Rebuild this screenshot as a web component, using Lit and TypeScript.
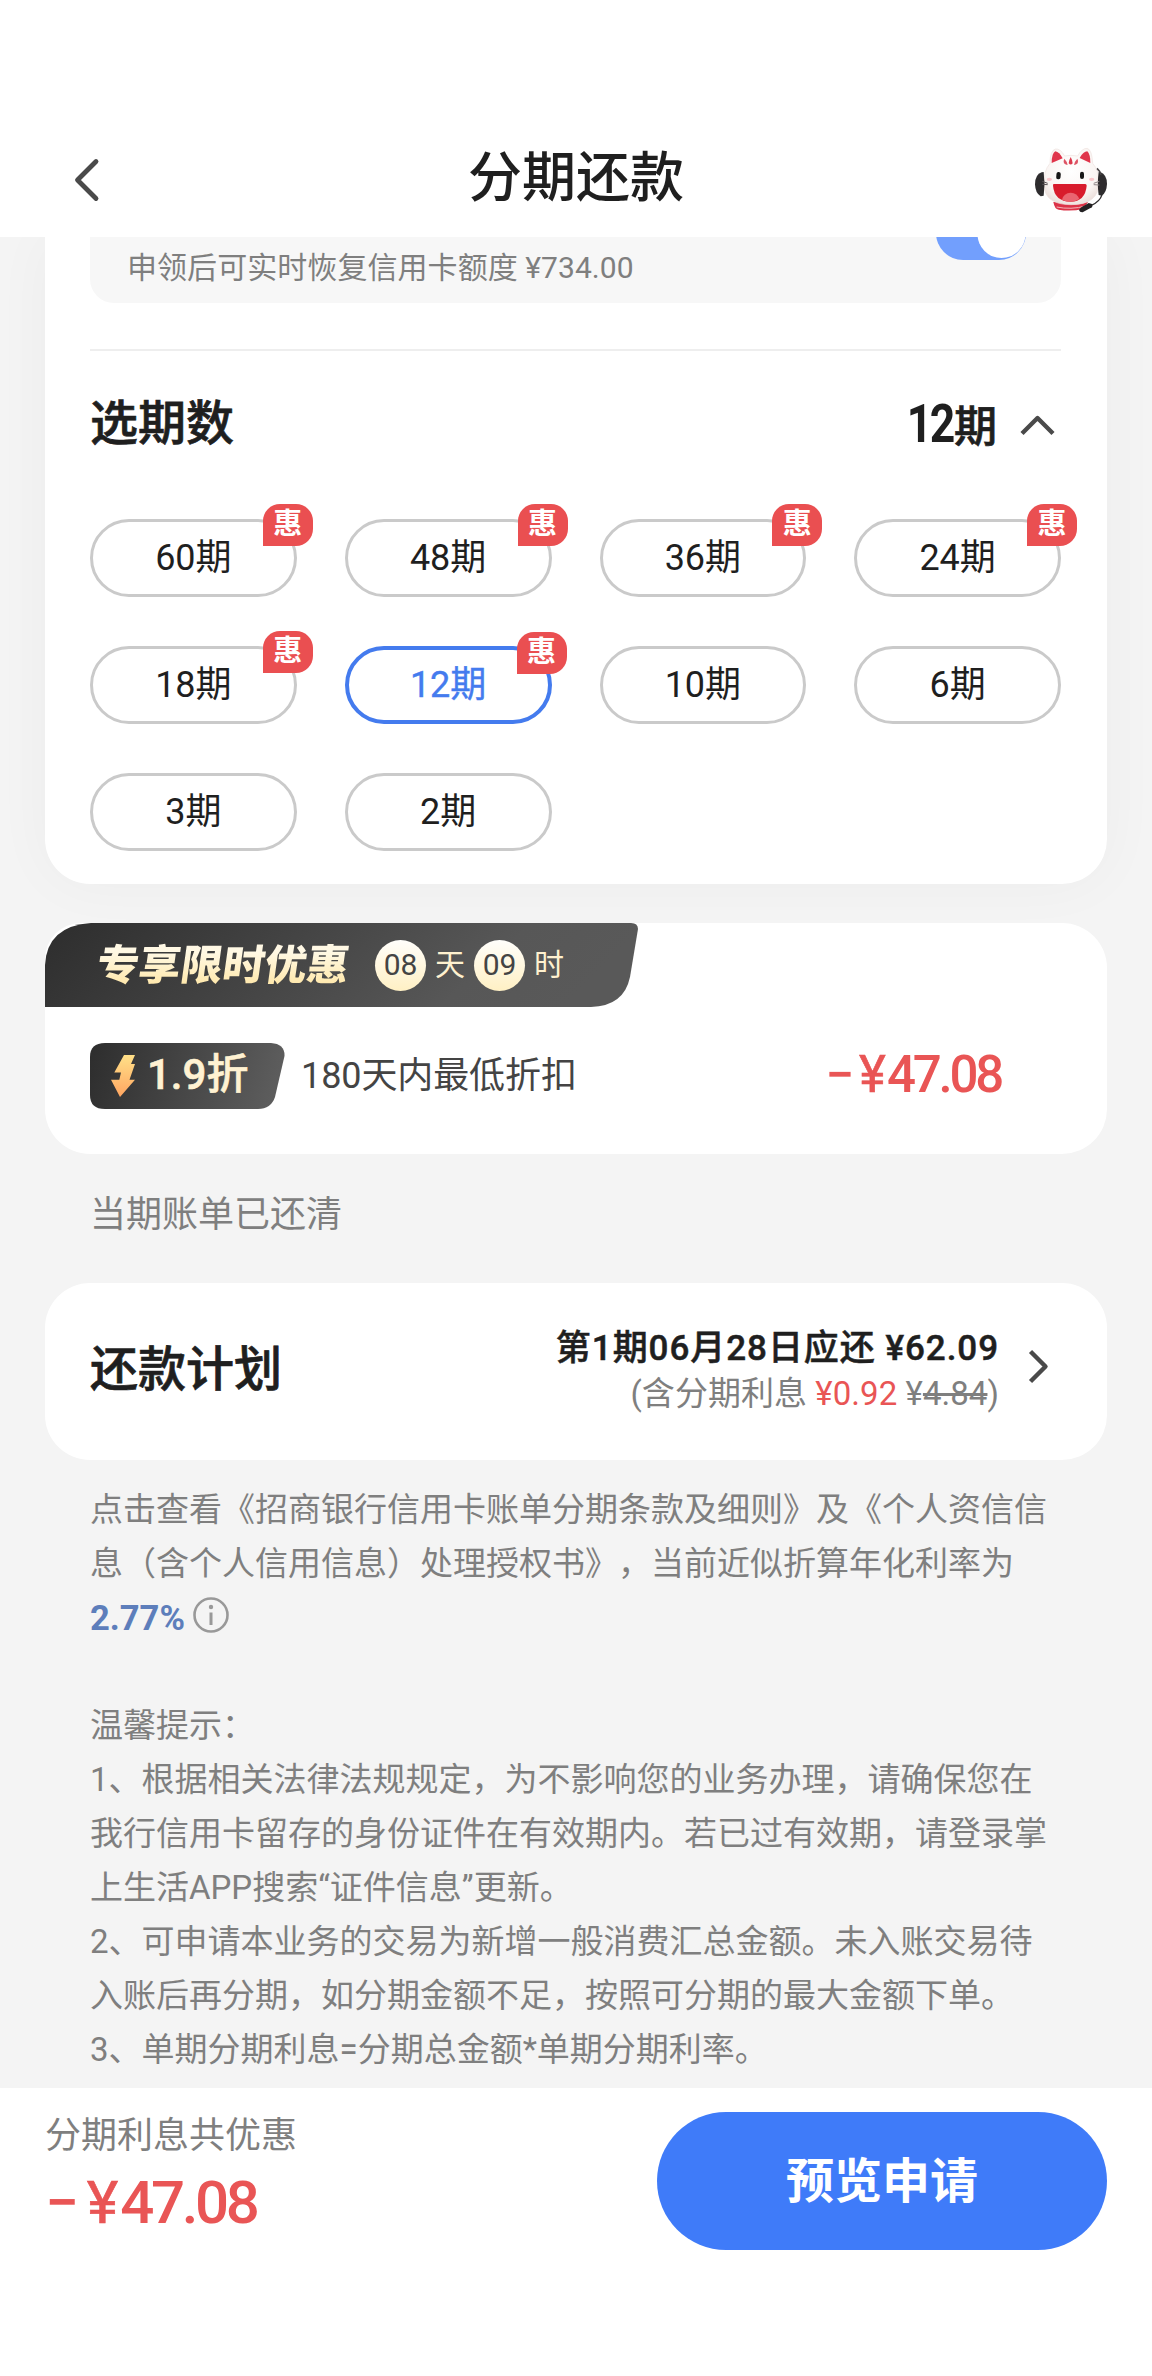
import { LitElement, html, css, svg, nothing } from "lit";
import { customElement, property, state } from "lit/decorators.js";
import { classMap } from "lit/directives/class-map.js";

interface Term {
  months: number;
  promo: boolean;
}

const TERMS: Term[] = [
  { months: 60, promo: true },
  { months: 48, promo: true },
  { months: 36, promo: true },
  { months: 24, promo: true },
  { months: 18, promo: true },
  { months: 12, promo: true },
  { months: 10, promo: false },
  { months: 6, promo: false },
  { months: 3, promo: false },
  { months: 2, promo: false },
];

const NOTICE: string[] = [
  "温馨提示：",
  "1、根据相关法律法规规定，为不影响您的业务办理，请确保您在",
  "我行信用卡留存的身份证件在有效期内。若已过有效期，请登录掌",
  "上生活APP搜索“证件信息”更新。",
  "2、可申请本业务的交易为新增一般消费汇总金额。未入账交易待",
  "入账后再分期，如分期金额不足，按照可分期的最大金额下单。",
  "3、单期分期利息=分期总金额*单期分期利率。",
];

const chevron = (points: string, w: number, h: number) => html`
  <svg width=${w} height=${h} viewBox="0 0 ${w} ${h}" fill="none">
    ${svg`<polyline points=${points} stroke="#4a4a4a" stroke-width="4.4" stroke-linejoin="round"/>`}
  </svg>
`;

@customElement("app-header")
export class AppHeader extends LitElement {
  static styles = css`
    :host {
      display: grid;
      grid-template-columns: 1fr auto 1fr;
      align-items: center;
      height: 117px;
      padding: 120px 45px 0;
      background: #fff;
      position: relative;
      z-index: 1;
    }
    svg {
      display: block;
    }
    .back {
      padding: 3px 0 0 28px;
    }
    .title {
      font-size: 54px;
      line-height: 60px;
      font-weight: 500;
      color: #1f1f1f;
    }
    .helper {
      justify-self: end;
      padding-top: 2px;
    }
  `;

  render() {
    return html`
      <div class="back">
        <svg width="28" height="44" viewBox="0 0 28 44" fill="none">
          <polyline
            points="23,3.5 4.5,22 23,40.5"
            stroke="#4a4a4a"
            stroke-width="4.8"
            stroke-linecap="round"
            stroke-linejoin="round"
          />
        </svg>
      </div>
      <div class="title">分期还款</div>
      <div class="helper">
        <svg width="72" height="66" viewBox="105 49 216 198">
          <defs>
            <radialGradient id="face" cx=".5" cy=".4" r=".65">
              <stop offset="0" stop-color="#fff" />
              <stop offset=".7" stop-color="#faf5f3" />
              <stop offset="1" stop-color="#e9dcd8" />
            </radialGradient>
          </defs>
          <path d="M160 214 Q164 236 176 237 Q212 243 250 235 L264 214Z" fill="#dc3348" />
          <path d="M170 229 Q212 238 258 226" stroke="#f3b5b8" stroke-width="3" fill="none" />
          <path
            d="M150 98 Q150 60 166 55 Q181 53 194 76 Q212 72 233 76 Q246 52 262 53 Q276 58 278 98 Q298 120 297 156 Q296 222 213 222 Q133 222 131 160 Q131 120 150 98Z"
            fill="url(#face)"
            stroke="#eee3e0"
            stroke-width="2"
          />
          <path d="M155 97 Q155 68 166 62 Q178 64 188 83Z" fill="#e0344a" />
          <path d="M239 82 Q250 62 262 62 Q271 70 271 97Z" fill="#e0344a" />
          <path d="M212 79 Q206 90 206 98 Q212 105 218 98 Q218 90 212 79Z" fill="#dd3a4e" />
          <path d="M193 84 Q189 91 192 98 Q197 103 203 103 Q201 92 193 84Z" fill="#dd5465" />
          <path d="M232 84 Q236 91 233 98 Q228 103 222 103 Q224 92 232 84Z" fill="#dd5465" />
          <path d="M125 125 Q105 132 105 161 Q106 188 122 197 L131 195 Q136 160 131 124Z" fill="#2e2c2e" />
          <path d="M301 124 Q321 132 321 160 Q320 186 305 195 L296 193 Q291 160 296 124Z" fill="#2e2c2e" />
          <path d="M291 113 Q300 121 303 132" stroke="#4b4648" stroke-width="5" fill="none" />
          <path d="M127 152 L143 158 M127 161 L143 162" stroke="#5a5356" stroke-width="3" />
          <path d="M298 152 L281 158 M298 163 L281 162" stroke="#8c8486" stroke-width="3" />
          <ellipse cx="148" cy="146" rx="8" ry="5" fill="#f9c6ca" />
          <ellipse cx="275" cy="146" rx="8" ry="5" fill="#f9c6ca" />
          <rect x="169" y="124" width="13" height="22" rx="6" fill="#171717" transform="rotate(5 175 135)" />
          <rect x="240" y="123" width="12" height="22" rx="6" fill="#171717" />
          <path d="M160 160 L256 160 Q260 160 260 165 Q256 212 212 213 Q163 212 159 165Z" fill="#d81b2c" />
          <path d="M186 207 Q191 187 212 186 Q232 187 238 205 Q226 213 212 213 Q196 213 186 207Z" fill="#ea6470" />
          <path d="M306 192 Q300 213 274 224" stroke="#2e2c2e" stroke-width="4" fill="none" />
          <path d="M266 217 L276 220 Q280 231 270 233 L248 245 Q239 246 237 238 Q240 230 256 223Z" fill="#232123" />
        </svg>
      </div>
    `;
  }
}

@customElement("term-option")
export class TermOption extends LitElement {
  @property({ type: Number }) months = 0;
  @property({ type: Boolean }) promo = false;
  @property({ type: Boolean }) selected = false;

  static styles = css`
    :host {
      display: block;
      position: relative;
    }
    .pill {
      box-sizing: border-box;
      width: 100%;
      height: 78px;
      border: 3px solid #cacaca;
      border-radius: 39px;
      background: #fff;
      color: #1f1f1f;
      font-size: 36px;
      line-height: 72px;
      text-align: center;
    }
    .pill.selected {
      border: 4px solid #447bee;
      line-height: 70px;
      color: #447bee;
      -webkit-text-stroke: 0.4px #447bee;
    }
    .badge {
      position: absolute;
      top: -15px;
      right: -16px;
      width: 50px;
      height: 42px;
      border-radius: 17px 17px 17px 0;
      background: #ea4f51;
      color: #fff;
      font-size: 29px;
      font-weight: 700;
      line-height: 41px;
      text-align: center;
    }
    .badge.inset {
      top: -14px;
      right: -15px;
    }
  `;

  render() {
    return html`
      <div class=${classMap({ pill: true, selected: this.selected })}>${this.months}期</div>
      ${this.promo
        ? html`<span class=${classMap({ badge: true, inset: this.selected })}>惠</span>`
        : nothing}
    `;
  }
}

@customElement("offer-card")
export class OfferCard extends LitElement {
  static styles = css`
    :host {
      display: block;
      height: 231px;
      border-radius: 36px 45px 45px 45px;
      background: #fff;
    }
    .banner {
      position: relative;
      display: flex;
      align-items: center;
      width: 593px;
      height: 84px;
    }
    .shape {
      position: absolute;
      inset: 0;
      display: block;
    }
    .headline,
    .count,
    .unit {
      position: relative;
    }
    .headline {
      margin-left: 52px;
      padding-top: 2px;
      width: 254px;
      font-size: 42px;
      line-height: 50px;
      font-weight: 900;
      white-space: nowrap;
      color: transparent;
      background: linear-gradient(#fff8e4 25%, #ffe9ae 85%);
      -webkit-background-clip: text;
      background-clip: text;
      transform: skewX(-8deg);
    }
    .count {
      width: 51px;
      height: 51px;
      margin-left: 24px;
      border-radius: 50%;
      background: linear-gradient(#fffefb, #fff0c4);
      color: #444;
      font-size: 30px;
      line-height: 50px;
      text-align: center;
    }
    .unit {
      margin-left: 9px;
      width: 30px;
      color: #fff1cf;
      font-size: 30px;
      line-height: 52px;
    }
    .unit + .count {
      margin-left: 9px;
    }
    .body {
      display: flex;
      align-items: center;
      height: 66px;
      padding: 36px 106px 0 45px;
    }
    .tag {
      position: relative;
      display: flex;
      align-items: center;
      box-sizing: border-box;
      width: 195px;
      height: 66px;
      padding-left: 21px;
    }
    .tag svg {
      position: relative;
      flex: none;
      margin-right: 11px;
    }
    .tag svg.shape {
      position: absolute;
    }
    .rate {
      position: relative;
      padding-bottom: 2px;
      color: #fff2d2;
      font-size: 42px;
      line-height: 60px;
      font-weight: 500;
      white-space: nowrap;
      -webkit-text-stroke: 0.6px #fff2d2;
    }
    .desc {
      margin-left: 16px;
      font-size: 36px;
      line-height: 60px;
      color: #444;
      letter-spacing: -0.1px;
    }
    .amount {
      margin-left: auto;
      padding-bottom: 3px;
      font-size: 51px;
      line-height: 60px;
      font-weight: 500;
      color: #e95555;
      letter-spacing: -3.2px;
    }
    .amount .sign {
      letter-spacing: 5px;
    }
    .amount .yen {
      font-weight: 400;
      -webkit-text-stroke: 0.6px #e95555;
      letter-spacing: 1px;
    }
  `;

  render() {
    return html`
      <div class="banner">
        <svg class="shape" width="593" height="84" viewBox="0 0 593 84">
          <defs>
            <linearGradient id="dark" x1="0" y1="0" x2="1" y2=".15">
              <stop offset="0" stop-color="#2d2d2d" />
              <stop offset=".8" stop-color="#575757" />
              <stop offset="1" stop-color="#595959" />
            </linearGradient>
          </defs>
          <path
            d="M0 84 V42 Q2 3 46 0 H586 Q593 0 593 6 L585 54 Q579 83 546 84Z"
            fill="url(#dark)"
          />
        </svg>
        <span class="headline">专享限时优惠</span>
        <span class="count">08</span>
        <span class="unit">天</span>
        <span class="count">09</span>
        <span class="unit">时</span>
      </div>
      <div class="body">
        <div class="tag">
          <svg class="shape" width="195" height="66" viewBox="0 0 195 66">
            <defs>
              <linearGradient id="tagfill" x1="0" y1="0" x2="1" y2=".1">
                <stop offset="0" stop-color="#2d2d2d" />
                <stop offset="1" stop-color="#5c5c5c" />
              </linearGradient>
            </defs>
            <path
              d="M15 0 H181 Q195 1 194.500 13 L185 54 Q181 66 168 66 H15 Q0 66 0 52 V14 Q0 0 15 0Z"
              fill="url(#tagfill)"
            />
          </svg>
          <svg width="25" height="42" viewBox="0 0 25 42">
            <defs>
              <linearGradient id="bolt" x1="0" y1="0" x2="0" y2="1">
                <stop offset="0" stop-color="#ffe088" />
                <stop offset="1" stop-color="#ffa561" />
              </linearGradient>
            </defs>
            <path
              d="M13 0 H24 L20 9 H24 L18.500 24.700 H24 L9 42 L0 24.700 H8.300 L10 17.500 H3.300Z"
              fill="url(#bolt)"
            />
          </svg>
          <span class="rate">1.9折</span>
        </div>
        <span class="desc">180天内最低折扣</span>
        <span class="amount"><span class="sign">−</span><span class="yen">¥</span>47.08</span>
      </div>
    `;
  }
}

@customElement("app-root")
export class AppRoot extends LitElement {
  @state() private selectedTerm = 12;

  static styles = css`
    :host {
      display: flex;
      flex-direction: column;
      width: 1152px;
      height: 2376px;
      overflow: hidden;
      background: #f4f4f4;
      font-family: Roboto, "Noto Sans CJK SC", sans-serif;
      text-spacing-trim: space-all;
      color: #1f1f1f;
    }
    svg {
      display: block;
    }
    main {
      flex: 1;
      min-height: 0;
      overflow: hidden;
      padding: 0 45px;
    }
    .terms-card {
      height: 647px;
      padding: 0 46px 0 45px;
      box-sizing: border-box;
      border-radius: 0 0 45px 45px;
      background: #fff;
      box-shadow: 0 0 60px rgba(0, 0, 0, 0.035);
    }
    .restore {
      display: flex;
      justify-content: space-between;
      align-items: flex-start;
      height: 66px;
      padding: 0 35px 0 37px;
      border-radius: 0 0 24px 24px;
      background: #f7f7f7;
      color: #7f7f7f;
      font-size: 30px;
      line-height: 62px;
      letter-spacing: 0.06px;
    }
    .restore .switch {
      flex: none;
      width: 90px;
      height: 24px;
      overflow: hidden;
    }
    .section {
      display: flex;
      align-items: center;
      justify-content: space-between;
      margin-top: 46px;
      padding-top: 35px;
      height: 76px;
      border-top: 2px solid #eee;
    }
    .heading {
      font-size: 48px;
      line-height: 70px;
      font-weight: 500;
      -webkit-text-stroke: 0.7px #1f1f1f;
    }
    .picked {
      display: flex;
      align-items: center;
      gap: 23px;
      padding: 2px 5px 0 0;
      font-size: 43px;
      line-height: 70px;
      font-weight: 500;
      -webkit-text-stroke: 0.7px #1f1f1f;
    }
    .picked b {
      display: inline-block;
      font-size: 53px;
      letter-spacing: -3px;
      font-weight: 700;
      margin-right: 1px;
      transform: scaleX(0.84);
      transform-origin: right center;
      -webkit-text-stroke: 0;
    }
    .grid {
      display: grid;
      grid-template-columns: repeat(4, 1fr);
      gap: 49px 48px;
      margin-top: 57px;
    }
    .offer {
      margin-top: 39px;
    }
    .cleared {
      padding: 31px 45px 0;
      height: 98px;
      font-size: 36px;
      line-height: 60px;
      color: #7f7f7f;
    }
    .plan {
      display: flex;
      align-items: center;
      height: 177px;
      box-sizing: border-box;
      padding: 0 57px 0 45px;
      border-radius: 45px;
      background: #fff;
    }
    .plan .heading {
      padding-bottom: 3px;
    }
    .figures {
      margin: 0 29px 0 auto;
      text-align: right;
    }
    .due {
      font-size: 35px;
      line-height: 45px;
      font-weight: 500;
      letter-spacing: 0.95px;
      -webkit-text-stroke: 0.5px #1f1f1f;
    }
    .interest {
      font-size: 33px;
      line-height: 46px;
      color: #7f7f7f;
      letter-spacing: 0.05px;
    }
    .interest .red {
      color: #e95555;
    }
    .interest s {
      text-decoration-thickness: 3px;
    }
    .plan svg {
      margin-bottom: 11px;
    }
    .fine {
      padding: 23px 0 0 45px;
      font-size: 33px;
      line-height: 54px;
      color: #7f7f7f;
      white-space: nowrap;
    }
    .rate-line {
      display: flex;
      align-items: center;
      gap: 8px;
      margin-bottom: 54px;
    }
    .rate-line b {
      font-size: 34.5px;
      font-weight: 700;
      color: #5d7ebb;
    }
    .rate-line svg {
      margin-bottom: 7px;
    }
    footer {
      display: flex;
      justify-content: space-between;
      align-items: flex-start;
      box-sizing: border-box;
      height: 288px;
      padding: 24px 45px 0;
      background: #fff;
    }
    .saving .label {
      padding-top: 1px;
      font-size: 36px;
      line-height: 46px;
      color: #7f7f7f;
    }
    .saving .amount {
      margin-top: 8px;
      font-size: 60px;
      line-height: 72px;
      font-weight: 500;
      color: #e95555;
      letter-spacing: -3.4px;
    }
    .amount .sign {
      letter-spacing: 8px;
    }
    .amount .yen {
      font-weight: 400;
      -webkit-text-stroke: 0.6px #e95555;
      letter-spacing: 2px;
    }
    .submit {
      width: 450px;
      height: 138px;
      border: 0;
      padding: 0 0 8px;
      border-radius: 69px;
      background: #3f7bf9;
      color: #fff;
      font-family: inherit;
      font-size: 48px;
      font-weight: 700;
    }
  `;

  render() {
    return html`
      <app-header></app-header>
      <main>
        <section class="terms-card">
          <div class="restore">
            <span>申领后可实时恢复信用卡额度 ¥734.00</span>
            <span class="switch">
              <svg width="90" height="24" viewBox="0 0 90 24">
                <rect x="0" y="-31" width="90" height="54" rx="27" fill="#729ffd" />
                <circle cx="65.500" cy="-3" r="24" fill="#fff" />
              </svg>
            </span>
          </div>
          <div class="section">
            <span class="heading">选期数</span>
            <span class="picked">
              <span><b>${this.selectedTerm}</b>期</span>
              ${chevron("2,19.5 17.5,4 33,19.5", 36, 22)}
            </span>
          </div>
          <div class="grid">
            ${TERMS.map(
              (t) => html`<term-option
                .months=${t.months}
                .promo=${t.promo}
                .selected=${t.months === this.selectedTerm}
                @click=${() => (this.selectedTerm = t.months)}
              ></term-option>`
            )}
          </div>
        </section>
        <offer-card class="offer"></offer-card>
        <div class="cleared">当期账单已还清</div>
        <section class="plan">
          <span class="heading">还款计划</span>
          <div class="figures">
            <div class="due">第1期06月28日应还 ¥62.09</div>
            <div class="interest">
              (含分期利息 <span class="red">¥0.92</span> ¥<s>4.84</s>)
            </div>
          </div>
          ${chevron("2.500,2.500 17.500,17.500 2.500,32.500", 22, 35)}
        </section>
        <section class="fine">
          <div>点击查看《招商银行信用卡账单分期条款及细则》及《个人资信信</div>
          <div>息（含个人信用信息）处理授权书》，当前近似折算年化利率为</div>
          <div class="rate-line">
            <b>2.77%</b>
            <svg width="36" height="36" viewBox="0 0 36 36" fill="none">
              <circle cx="18" cy="18" r="16.500" stroke="#999" stroke-width="2.600" />
              <circle cx="18" cy="10" r="2.200" fill="#999" />
              <path d="M18 15.500 V28" stroke="#999" stroke-width="3" />
            </svg>
          </div>
          ${NOTICE.map((line) => html`<div>${line}</div>`)}
        </section>
      </main>
      <footer>
        <div class="saving">
          <div class="label">分期利息共优惠</div>
          <div class="amount"><span class="sign">−</span><span class="yen">¥</span>47.08</div>
        </div>
        <button class="submit">预览申请</button>
      </footer>
    `;
  }
}
